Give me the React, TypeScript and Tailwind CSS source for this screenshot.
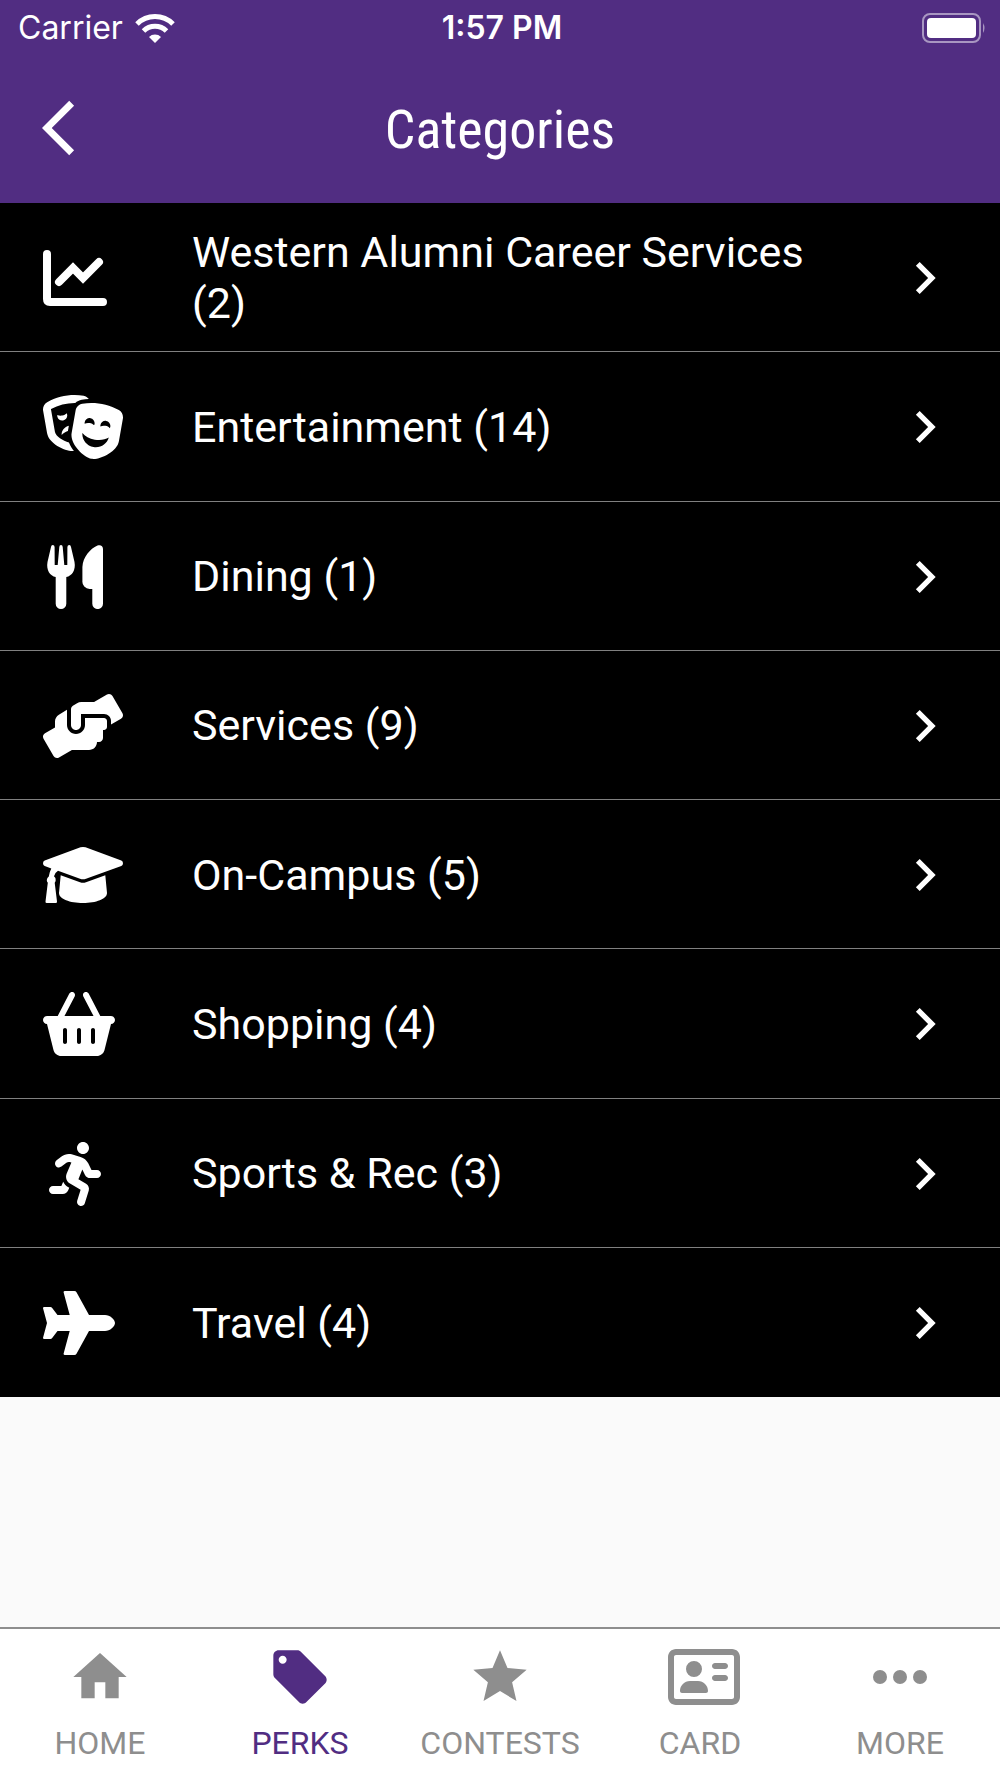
import React from 'react';
import { FaHandsHelping, FaRunning, FaTheaterMasks } from 'react-icons/fa';
import { FaBasketShopping, FaRegAddressCard } from 'react-icons/fa6';
import { MdArrowBackIos, MdChevronRight, MdHome, MdLocalOffer, MdStar } from 'react-icons/md';

type IconProps = { className?: string };

function ChartIcon({ className }: IconProps) {
  return (
    <svg viewBox="0 0 512 512" className={className} fill="none" stroke="currentColor" strokeWidth="64" strokeLinecap="round" aria-hidden="true">
      <path d="M32 64v360q0 24 24 24h424" />
      <path d="M128 288l112-112 80 80 128-128" />
    </svg>
  );
}

function ForkKnifeIcon({ className }: IconProps) {
  return (
    <svg viewBox="0 0 64 64" className={className} fill="currentColor" aria-hidden="true">
      <path d="M8 2Q8.300 0 9.700 0Q11.500 0 11.600 2L11.700 20H14.700L16.300 2Q16.400 0 18 0Q19.600 0 19.700 2L21.300 20H24.300L24.400 2Q24.500 0 26.300 0Q27.700 0 28 2L31.500 17C33 25 29 31 23.300 32V58.700a5.300 5.300 0 0 1-10.600 0V32C7 31 3 25 4.500 17z" />
      <path d="M60 4V58.700a5.300 5.300 0 0 1-10.700 0V44H46.700a7.300 7.300 0 0 1-7.300-8V22C40 12 47 4 54.500 .6C57.500-.6 60 1 60 4z" />
    </svg>
  );
}

function GraduationIcon({ className }: IconProps) {
  return (
    <svg viewBox="0 0 80 64" className={className} fill="currentColor" aria-hidden="true">
      <path d="M37.500 4.300Q40 3.600 42.500 4.300L78.300 17.500Q80 18.300 80 20.300Q80 22.300 78.300 23L43 35.800Q40 36.800 37 35.800L15 27.800Q11.800 29.800 11 33.200Q13 34.700 12.700 37.200Q12.500 38.800 11.700 39.700L14 58.500Q14.200 60 12.700 60H3.800Q2.300 60 2.500 58.500L4.800 39.700Q3.700 38.500 3.800 37Q4 34.700 5.800 33.500Q6.300 29.500 8.300 25.600L1.700 23Q0 22.300 0 20.300Q0 18.300 1.700 17.500z" />
      <path d="M17.700 32.300L37 39.300Q40 40.300 43 39.300L62.300 32.300L64 50C64 56 53 60 40 60S16 56 16 50z" />
    </svg>
  );
}

function PlaneIcon({ className }: IconProps) {
  return (
    <svg viewBox="0 0 72 64" className={className} fill="currentColor" aria-hidden="true">
      <path d="M22 0H31.300Q32.800 0 33.500 1.300L46 24H62C67 24 72 28.500 72 32S67 40 62 40H46L33.500 62.700Q32.800 64 31.300 64H22Q20.200 64 20.700 62.300L26.700 40H14.500L9 47.200Q8.400 48 7.400 48H1.200Q-.3 48 .1 46.500L4 32L.1 17.500Q-.3 16 1.200 16H7.400Q8.400 16 9 16.800L14.500 24H26.700L20.700 1.700Q20.200 0 22 0z" />
    </svg>
  );
}

function MoreIcon({ className }: IconProps) {
  return (
    <svg viewBox="0 0 64 64" className={className} fill="currentColor" aria-hidden="true">
      <circle cx="12" cy="32" r="7" />
      <circle cx="32" cy="32" r="7" />
      <circle cx="52" cy="32" r="7" />
    </svg>
  );
}

function WifiIcon({ className }: IconProps) {
  return (
    <svg viewBox="0 0 40 30" className={className} fill="none" stroke="currentColor" strokeWidth="5" aria-hidden="true">
      <path d="M2 11a25.500 25.500 0 0 1 36 0" />
      <path d="M8.500 18a16.300 16.300 0 0 1 23 0" />
      <path d="M14 24a8.500 8.500 0 0 1 12 0l-6 6z" fill="currentColor" stroke="none" />
    </svg>
  );
}

function BatteryIcon({ className }: IconProps) {
  return (
    <svg viewBox="0 0 64 32" className={className} aria-hidden="true">
      <rect x="1" y="2" width="57" height="28" rx="7" fill="none" stroke="currentColor" strokeWidth="2" opacity="0.5" />
      <rect x="5" y="6" width="49" height="20" rx="4" fill="currentColor" />
      <path d="M61 11q3 5 0 10z" fill="currentColor" opacity="0.5" />
    </svg>
  );
}

const categories = [
  { name: 'Western Alumni Career Services', count: 2, icon: ChartIcon, size: 'w-16' },
  { name: 'Entertainment', count: 14, icon: FaTheaterMasks, size: 'w-20' },
  { name: 'Dining', count: 1, icon: ForkKnifeIcon, size: 'w-16' },
  { name: 'Services', count: 9, icon: FaHandsHelping, size: 'w-20' },
  { name: 'On-Campus', count: 5, icon: GraduationIcon, size: 'w-20' },
  { name: 'Shopping', count: 4, icon: FaBasketShopping, size: 'w-18' },
  { name: 'Sports & Rec', count: 3, icon: FaRunning, size: 'w-16' },
  { name: 'Travel', count: 4, icon: PlaneIcon, size: 'w-18' },
];

const tabs = [
  { label: 'HOME', icon: MdHome, size: 'w-16' },
  { label: 'PERKS', icon: MdLocalOffer, size: 'w-16', active: true },
  { label: 'CONTESTS', icon: MdStar, size: 'w-16' },
  { label: 'CARD', icon: FaRegAddressCard, size: 'w-18' },
  { label: 'MORE', icon: MoreIcon, size: 'w-16' },
];

function Header() {
  return (
    <header className="bg-[#512d82] text-white">
      <div className="grid h-14 grid-cols-3 items-center pr-3.5 pl-[18px] font-['Inter',sans-serif] text-[32px]">
        <div className="flex items-center gap-3">
          <span>Carrier</span>
          <WifiIcon className="h-[30px] w-10" />
        </div>
        <span className="text-center font-semibold">1:57 PM</span>
        <BatteryIcon className="h-8 w-16 justify-self-end" />
      </div>
      <div className="grid h-[147px] grid-cols-[1fr_auto_1fr] items-center px-[42px]">
        <button type="button" aria-label="Back" className="justify-self-start pb-1">
          <MdArrowBackIos className="size-[66px]" />
        </button>
        <h1 className="font-['Roboto_Condensed','Roboto',sans-serif] text-[54px]">Categories</h1>
      </div>
    </header>
  );
}

function CategoryList() {
  return (
    <ul className="grid min-h-[1194px] auto-rows-fr divide-y divide-[#808080] bg-black text-white">
      {categories.map(({ name, count, icon: Icon, size }) => (
        <li key={name} className="flex">
          <a href="#" className="flex flex-1 items-center px-[43px] pt-0.5">
            <span className="w-[149px] shrink-0">
              <Icon className={`h-16 ${size}`} />
            </span>
            <span className="flex-1 pr-20 text-[43px] leading-[51px]">
              {name} ({count})
            </span>
            <MdChevronRight className="size-16 shrink-0" />
          </a>
        </li>
      ))}
    </ul>
  );
}

function TabBar() {
  return (
    <nav className="grid h-[151px] grid-cols-5 border-t-2 border-[#8e8e8e] bg-white">
      {tabs.map(({ label, icon: Icon, size, active }) => (
        <a
          key={label}
          href="#"
          aria-current={active ? 'page' : undefined}
          className={`flex flex-col items-center gap-3.5 pt-4 text-[32px] leading-10 ${active ? 'text-[#512d82]' : 'text-[#8e8e8e]'}`}
        >
          <span className="w-16">
            <Icon className={`h-16 max-w-none ${size}`} />
          </span>
          <span>{label}</span>
        </a>
      ))}
    </nav>
  );
}

export default function App() {
  return (
    <div className="flex min-h-screen flex-col bg-[#fafafa] font-['Roboto',sans-serif]">
      <Header />
      <main className="flex-1">
        <CategoryList />
      </main>
      <TabBar />
    </div>
  );
}
